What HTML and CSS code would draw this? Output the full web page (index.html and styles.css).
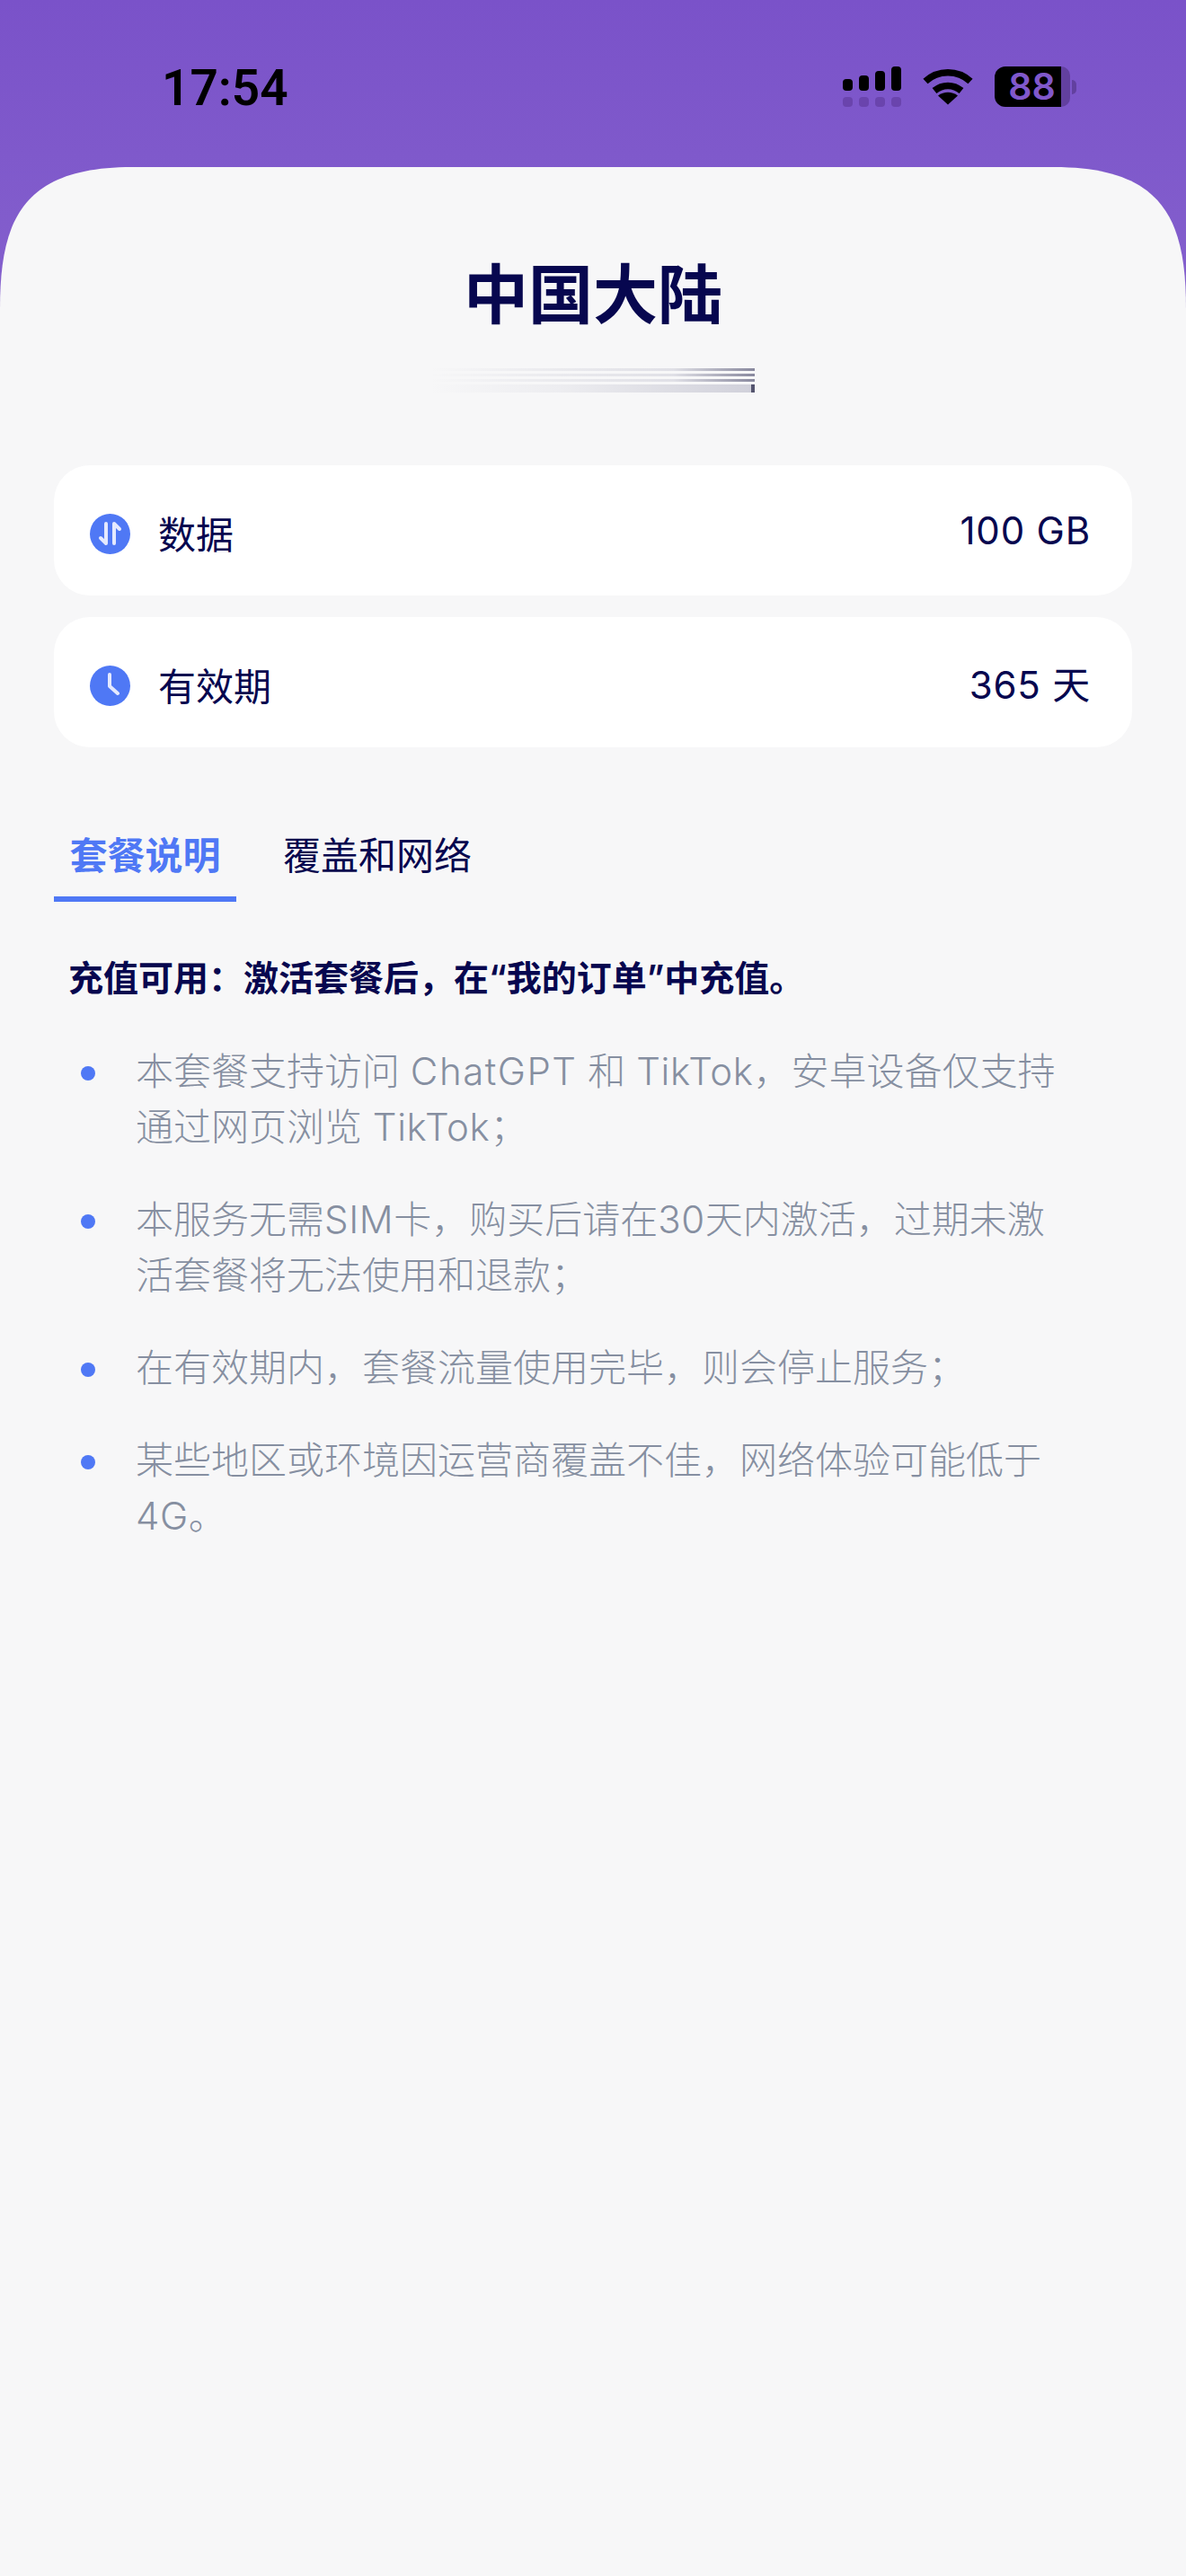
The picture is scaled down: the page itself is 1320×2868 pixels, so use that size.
FILE: index.html
```html
<!DOCTYPE html>
<html lang="zh-CN">
    <head>
        <meta charset="UTF-8">
        <meta name="viewport" content="width=device-width, initial-scale=1.0">
        <title>中国大陆</title>
        <link rel="stylesheet" href="styles.css">
    </head>
    <body>
        <div class="status-bar">
            <span class="time">17:54</span>
            <div class="status-icons">
                <div class="signal">
                    <div class="signal-bars">
                        <i class="bar-1"></i><i class="bar-2"></i><i class="bar-3"></i><i class="bar-4"></i>
                    </div>
                    <div class="signal-dim">
                        <i></i><i></i><i></i><i></i>
                    </div>
                </div>
                <svg class="wifi" width="58" height="42" viewBox="0 0 58 42">
                    <path d="M4 15.5C18 2.5 40 2.5 54 15.5" fill="none" stroke="#000" stroke-width="7.5"/>
                    <path d="M14 26C23 18.5 35 18.5 44 26" fill="none" stroke="#000" stroke-width="7.5"/>
                    <path d="M29 41.5L18 31.5C24.5 26.5 33.5 26.5 40 31.5Z" fill="#000"/>
                </svg>
                <div class="battery">
                    <div class="battery-level">88</div>
                    <div class="battery-rest"></div>
                    <div class="battery-tip"></div>
                </div>
            </div>
        </div>

        <div class="sheet">
            <h1>中国大陆</h1>
            <div class="subtitle-lines">
                <div class="line line-1"></div>
                <div class="line line-2"></div>
                <div class="line line-3"></div>
                <div class="line line-4"></div>
            </div>

            <div class="info-cards">
                <div class="info-card">
                    <svg class="info-icon" width="45" height="45" viewBox="0 0 45 45">
                        <circle cx="22.5" cy="22.5" r="22.5" fill="#4f78f5"/>
                        <path d="M18 11V33L12 27M27 33V11L33 17" fill="none" stroke="#e4e9fe" stroke-width="4" stroke-linecap="round" stroke-linejoin="round"/>
                    </svg>
                    <span class="info-label">数据</span>
                    <span class="info-value">100 GB</span>
                </div>
                <div class="info-card">
                    <svg class="info-icon" width="45" height="45" viewBox="0 0 45 45">
                        <circle cx="22.5" cy="22.5" r="22.5" fill="#4f78f5"/>
                        <path d="M22 10V23L31 31" fill="none" stroke="#e4e9fe" stroke-width="4" stroke-linecap="round" stroke-linejoin="round"/>
                    </svg>
                    <span class="info-label">有效期</span>
                    <span class="info-value">365 天</span>
                </div>
            </div>

            <div class="tabs">
                <div class="tab active">套餐说明</div>
                <div class="tab">覆盖和网络</div>
            </div>

            <p class="notice">充值可用：激活套餐后，在“我的订单”中充值。</p>

            <ul class="details">
                <li>本套餐支持访问 <span class="latin wide">ChatGPT</span> 和 <span class="latin">TikTok</span>，安卓设备仅支持<br>通过网页浏览 <span class="latin">TikTok</span>；</li>
                <li>本服务无需<span class="latin">SIM</span>卡，购买后请在<span class="latin">30</span>天内激活，过期未激<br>活套餐将无法使用和退款；</li>
                <li>在有效期内，套餐流量使用完毕，则会停止服务；</li>
                <li>某些地区或环境因运营商覆盖不佳，网络体验可能低于<br><span class="latin">4G</span>。</li>
            </ul>
        </div>
    </body>
</html>
```

FILE: styles.css
```css
* {
    box-sizing: border-box;
    margin: 0;
}

body {
    width: 1320px;
    height: 2868px;
    overflow: hidden;
    background: linear-gradient(180deg, #7a52c9 0, #8460cd 340px);
    font-family: "Inter", "Noto Sans CJK SC", sans-serif;
    color: #07074f;
}

.status-bar {
    height: 186px;
    display: flex;
    justify-content: space-between;
    padding: 66px 122px 0 180px;
}

.time {
    font-family: "Roboto", sans-serif;
    font-size: 55px;
    font-weight: 600;
    line-height: 64px;
    color: #000;
}

.status-icons {
    display: flex;
    align-items: flex-start;
    padding-top: 8px;
}

.signal {
    width: 65px;
    margin-right: 23px;
}

.signal-bars, .signal-dim {
    display: flex;
    justify-content: space-between;
    align-items: flex-end;
}

.signal-bars {
    height: 27px;
}

.signal-bars i, .signal-dim i {
    display: block;
    width: 11px;
    border-radius: 4px;
    background-color: #000;
}

.bar-1 { height: 13px; }
.bar-2 { height: 17px; }
.bar-3 { height: 22px; }
.bar-4 { height: 27px; }

.signal-dim {
    margin-top: 7px;
}

.signal-dim i {
    height: 11px;
    background-color: #6a44ad;
}

.wifi {
    margin-top: 1px;
    margin-right: 23px;
}

.battery {
    display: flex;
    align-items: center;
    height: 45px;
}

.battery-level {
    width: 74px;
    height: 45px;
    background-color: #000;
    border-radius: 12px 0 0 12px;
    color: #8058cb;
    font-family: "Inter", sans-serif;
    font-size: 41px;
    font-weight: 600;
    line-height: 45px;
    text-align: center;
    padding-left: 9px;
}

.battery-rest {
    width: 10px;
    height: 45px;
    background-color: #62409f;
    border-radius: 0 12px 12px 0;
}

.battery-tip {
    width: 5px;
    height: 16px;
    margin-left: 2px;
    background-color: #62409f;
    border-radius: 0 8px 8px 0;
}

/* the corners run on like a squircle, border-radius can't do that */
.sheet {
    height: 2682px;
    background-color: #f7f7f8;
    clip-path: path("M0 158C0 60 24 0 147 0L1173 0C1296 0 1320 60 1320 158L1320 2682L0 2682Z");
    padding: 94px 60px 0;
}

h1 {
    font-family: "Noto Sans CJK SC", sans-serif;
    font-size: 72px;
    font-weight: 700;
    line-height: 86px;
    text-align: center;
}

.subtitle-lines {
    width: 362px;
    margin: 44px 0 0 418px;
    display: flex;
    flex-direction: column;
    gap: 3px;
}

.line {
    height: 3px;
    background: linear-gradient(90deg, rgba(120, 120, 150, 0) 0, rgba(120, 120, 150, 0.1) 40%, rgba(120, 120, 150, 0.18) 75%, rgba(90, 90, 120, 0.7) 100%);
}

.line-4 {
    height: 9px;
    background: linear-gradient(90deg, rgba(120, 120, 150, 0) 0, rgba(120, 120, 150, 0.08) 40%, rgba(120, 120, 150, 0.3) 99%, #55556f 99%);
}

.info-cards {
    margin-top: 81px;
    display: flex;
    flex-direction: column;
    gap: 24px;
}

.info-card {
    height: 145px;
    background-color: #fff;
    border-radius: 40px;
    display: flex;
    align-items: center;
    padding: 0 46px 0 40px;
}

.info-icon {
    margin-top: 8px;
}

.info-label {
    margin-left: 31px;
    margin-top: 4px;
    font-family: "Noto Sans CJK SC", sans-serif;
    font-size: 42px;
}

.info-value {
    margin-left: auto;
    font-size: 42px;
    letter-spacing: 0.8px;
}

.tabs {
    margin-top: 83px;
    display: flex;
    gap: 52px;
    font-family: "Noto Sans CJK SC", sans-serif;
    font-size: 42px;
}

.tab {
    height: 89px;
    line-height: 70px;
}

.tab.active {
    width: 203px;
    text-align: center;
    font-weight: 700;
    color: #4f78f5;
    border-bottom: 6px solid #4f78f5;
}

.notice {
    margin-top: 59px;
    padding-left: 16px;
    font-size: 39px;
    font-weight: 600;
    line-height: 52px;
}

.details {
    list-style: none;
    margin-top: 47px;
    padding: 0 0 0 91px;
    font-size: 42px;
    line-height: 62px;
    color: #868fa1;
    font-weight: 300;
}

.details li {
    position: relative;
    margin-bottom: 41px;
}

.details li::before {
    content: "";
    position: absolute;
    left: -61px;
    top: 25px;
    width: 16px;
    height: 16px;
    border-radius: 50%;
    background-color: #4f78f5;
}

.latin {
    letter-spacing: 0.6px;
}

.latin.wide {
    letter-spacing: 1.5px;
}
```
